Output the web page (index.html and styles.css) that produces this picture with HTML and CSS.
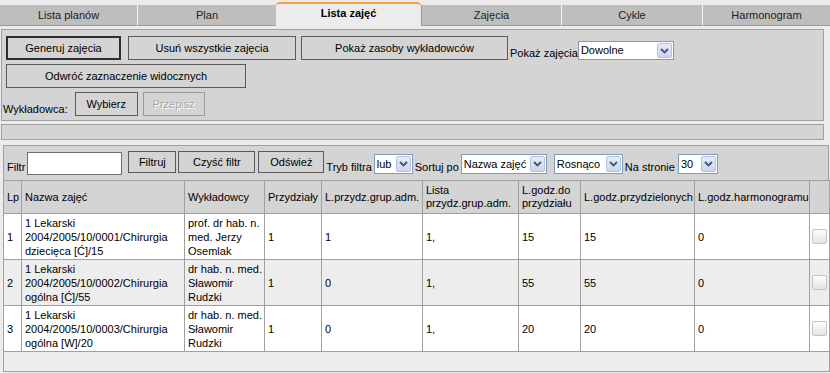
FILE: index.html
```html
<!DOCTYPE html>
<html lang="pl">
  <head>
    <meta charset="UTF-8" />
    <title>Lista zajęć</title>
    <link rel="stylesheet" href="styles.css">
  </head>
  <body>
    <div class="tabs">
      <div class="tab">Lista planów</div>
      <div class="tab">Plan</div>
      <div class="tab active">Lista zajęć</div>
      <div class="tab">Zajęcia</div>
      <div class="tab">Cykle</div>
      <div class="tab">Harmonogram</div>
    </div>

    <div class="panel actions">
      <div class="row">
        <button class="btn btn-default w-gen">Generuj zajęcia</button>
        <button class="btn w-del">Usuń wszystkie zajęcia</button>
        <button class="btn w-res">Pokaż zasoby wykładowców</button>
        <span class="lbl lbl-show">Pokaż zajęcia</span>
        <span class="sel w-show"
          ><span class="val">Dowolne</span
          ><span class="arr"><svg width="9" height="6" viewBox="0 0 9 6"><path d="M1 1l3.5 3.5L8 1" fill="none" stroke="#3f557f" stroke-width="1.8"/></svg></span
        ></span>
      </div>
      <div class="row">
        <button class="btn w-inv">Odwróć zaznaczenie widocznych</button>
      </div>
      <div class="row">
        <span class="lbl lbl-lect">Wykładowca:</span>
        <button class="btn w-pick">Wybierz</button>
        <button class="btn w-copy" disabled>Przepisz</button>
      </div>
    </div>

    <div class="panel status-bar"></div>

    <div class="list">
      <div class="filters">
        <span class="lbl">Filtr</span>
        <input class="filter-input" type="text" />
        <button class="btn w-filter">Filtruj</button>
        <button class="btn w-clear">Czyść filtr</button>
        <button class="btn w-refresh">Odśwież</button>
        <span class="lbl">Tryb filtra</span>
        <span class="sel w-mode"
          ><span class="val">lub</span
          ><span class="arr"><svg width="9" height="6" viewBox="0 0 9 6"><path d="M1 1l3.5 3.5L8 1" fill="none" stroke="#3f557f" stroke-width="1.8"/></svg></span
        ></span>
        <span class="lbl">Sortuj po</span>
        <span class="sel w-sort"
          ><span class="val">Nazwa zajęć</span
          ><span class="arr"><svg width="9" height="6" viewBox="0 0 9 6"><path d="M1 1l3.5 3.5L8 1" fill="none" stroke="#3f557f" stroke-width="1.8"/></svg></span
        ></span>
        <span class="sel w-order"
          ><span class="val">Rosnąco</span
          ><span class="arr"><svg width="9" height="6" viewBox="0 0 9 6"><path d="M1 1l3.5 3.5L8 1" fill="none" stroke="#3f557f" stroke-width="1.8"/></svg></span
        ></span>
        <span class="lbl">Na stronie</span>
        <span class="sel w-page"
          ><span class="val">30</span
          ><span class="arr"><svg width="9" height="6" viewBox="0 0 9 6"><path d="M1 1l3.5 3.5L8 1" fill="none" stroke="#3f557f" stroke-width="1.8"/></svg></span
        ></span>
      </div>

      <table>
        <colgroup>
          <col class="c-lp" />
          <col class="c-name" />
          <col class="c-lect" />
          <col class="c-assign" />
          <col class="c-groups" />
          <col class="c-list" />
          <col class="c-todo" />
          <col class="c-done" />
          <col class="c-sched" />
          <col class="c-check" />
        </colgroup>
        <thead>
          <tr>
            <th>Lp</th>
            <th>Nazwa zajęć</th>
            <th>Wykładowcy</th>
            <th>Przydziały</th>
            <th>L.przydz.grup.adm.</th>
            <th>Lista<br />przydz.grup.adm.</th>
            <th>L.godz.do<br />przydziału</th>
            <th>L.godz.przydzielonych</th>
            <th>L.godz.harmonogramu</th>
            <th></th>
          </tr>
        </thead>
        <tbody>
          <tr>
            <td>1</td>
            <td>1 Lekarski<br />2004/2005/10/0001/Chirurgia<br />dziecięca [Ć]/15</td>
            <td>prof. dr hab. n.<br />med. Jerzy<br />Osemlak</td>
            <td>1</td>
            <td>1</td>
            <td>1,</td>
            <td>15</td>
            <td>15</td>
            <td>0</td>
            <td class="check-cell"><span class="chk"></span></td>
          </tr>
          <tr>
            <td>2</td>
            <td>1 Lekarski<br />2004/2005/10/0002/Chirurgia<br />ogólna [Ć]/55</td>
            <td>dr hab. n. med.<br />Sławomir<br />Rudzki</td>
            <td>1</td>
            <td>0</td>
            <td>1,</td>
            <td>55</td>
            <td>55</td>
            <td>0</td>
            <td class="check-cell"><span class="chk"></span></td>
          </tr>
          <tr>
            <td>3</td>
            <td>1 Lekarski<br />2004/2005/10/0003/Chirurgia<br />ogólna [W]/20</td>
            <td>dr hab. n. med.<br />Sławomir<br />Rudzki</td>
            <td>1</td>
            <td>0</td>
            <td>1,</td>
            <td>20</td>
            <td>20</td>
            <td>0</td>
            <td class="check-cell"><span class="chk"></span></td>
          </tr>
          <tr class="foot">
            <td colspan="10">&nbsp;</td>
          </tr>
        </tbody>
      </table>
    </div>
  </body>
</html>
```

FILE: styles.css
```css
body {
  margin: 0;
  width: 830px;
  height: 373px;
  overflow: hidden;
  background: #ececec;
  font-family: "Liberation Sans", Arial, sans-serif;
  font-size: 11px;
  color: #000;
}

/* tabs */
.tabs {
  display: grid;
  grid-template-columns: 137px 139px 145px 140px 141px 1fr;
  height: 26px;
  align-items: end;
}
.tab {
  box-sizing: border-box;
  height: 21px;
  background: #bebebe;
  border-bottom: 1px solid #9a9a9a;
  border-left: 1px solid #f2f5fa;
  text-align: center;
  line-height: 20px;
  color: #222;
}
.tab:first-child {
  border-left: none;
}
.tab.active {
  height: 24px;
  background: #ececec;
  border: none;
  border-top: 2px solid #f2a23a;
  border-radius: 4px 4px 0 0;
  font-weight: bold;
  color: #000;
  line-height: 19px;
}
.tab.active + .tab {
  border-left-color: #9a9a9a;
}

/* panels */
.panel {
  box-sizing: border-box;
  width: 823px;
  margin-left: 1px;
  background: #d4d4d4;
  border: 1px solid #a0a0a0;
}
.actions {
  margin-top: 3px;
  height: 92px;
  padding: 6px 4px 0;
}
.row {
  display: flex;
  align-items: flex-end;
  height: 24px;
}
.row + .row {
  margin-top: 4px;
}
.status-bar {
  margin-top: 3px;
  height: 16px;
}

.lbl {
  line-height: 13px;
  white-space: nowrap;
  margin-left: 2px;
}
.lbl-lect {
  margin-left: -3px;
}

/* buttons */
.btn {
  box-sizing: border-box;
  height: 24px;
  padding: 0;
  background: #d4d4d4;
  border: 1px solid #5a5a5a;
  font-family: inherit;
  font-size: 11px;
  color: #000;
  text-align: center;
}
.btn-default {
  border: 2px solid #2e2e2e;
}
.btn:disabled {
  border-color: #9a9a9a;
  color: #a8a8a8;
  text-shadow: 1px 1px 0 #fff;
}
.w-gen { width: 115px; }
.w-del { width: 168px; margin-left: 7px; }
.w-res { width: 207px; margin-left: 5px; }
.w-inv { width: 240px; }
.w-pick { width: 63px; margin-left: 7px; }
.w-copy { width: 62px; margin-left: 5px; }

/* selects */
.sel {
  box-sizing: border-box;
  display: flex;
  height: 19px;
  background: #fff;
  border: 1px solid #7f9db9;
}
.sel .val {
  flex: 1;
  padding-left: 2px;
  line-height: 17px;
  white-space: nowrap;
  overflow: hidden;
}
.sel .arr {
  box-sizing: border-box;
  display: flex;
  align-items: center;
  justify-content: center;
  width: 15px;
  margin: 1px;
  background: linear-gradient(#e8ecf7, #cbd5ec);
  border: 1px solid #b4c2e0;
  border-radius: 2px;
}
.w-show { width: 96px; margin-left: 0; }

/* list */
.list {
  margin: 5px 1px 0 3px;
  background: #d4d4d4;
}
.filters {
  box-sizing: border-box;
  display: flex;
  align-items: flex-end;
  height: 35px;
  padding: 0 0 5px 1px;
  border: 1px solid #a0a0a0;
  border-bottom: none;
}
.filters .lbl {
  margin-bottom: 1px;
}
.filters .btn {
  height: 22px;
  margin-bottom: 2px;
}
.filters .sel {
  height: 20px;
  margin-bottom: 1px;
  margin-left: 2px;
}
.filters .sel .val {
  line-height: 18px;
}
.filter-input {
  box-sizing: border-box;
  width: 95px;
  height: 23px;
  margin: 0 0 0 2px;
  border: 1px solid #6f6f6f;
  background: #fff;
}
.w-filter { width: 48px; margin-left: 6px; }
.w-clear { width: 77px; margin-left: 2px; }
.w-refresh { width: 66px; margin-left: 3px; }
.w-mode { width: 39px; }
.w-sort { width: 86px; }
.w-order { width: 69px; margin-left: 7px !important; }
.w-page { width: 40px; margin-left: 3px !important; }

/* table */
table {
  width: 100%;
  border-collapse: collapse;
  table-layout: fixed;
}
.c-lp { width: 18px; }
.c-name { width: 163px; }
.c-lect { width: 80px; }
.c-assign { width: 57px; }
.c-groups { width: 101px; }
.c-list { width: 96px; }
.c-todo { width: 62px; }
.c-done { width: 114px; }
.c-sched { width: 115px; }
.c-check { width: 20px; }
th,
td {
  border: 1px solid #a0a0a0;
  text-align: left;
  vertical-align: middle;
  white-space: nowrap;
  overflow: hidden;
}
th {
  padding: 3px 3px;
  background: #d4d4d4;
  font-weight: normal;
  line-height: 13px;
}
td {
  padding: 2px 3px 1px;
  line-height: 14px;
  background: #fff;
}
tbody tr:nth-child(even) td {
  background: #ededed;
}
.foot td {
  padding: 0;
  line-height: 19px;
  background: #ececec;
}
.check-cell {
  padding: 0;
  text-align: center;
}
.chk {
  box-sizing: border-box;
  display: inline-block;
  width: 15px;
  height: 15px;
  vertical-align: middle;
  border: 1px solid #c4c4c4;
  border-radius: 2px;
  background: linear-gradient(#fdfdfd, #e4e4e4);
}
```
